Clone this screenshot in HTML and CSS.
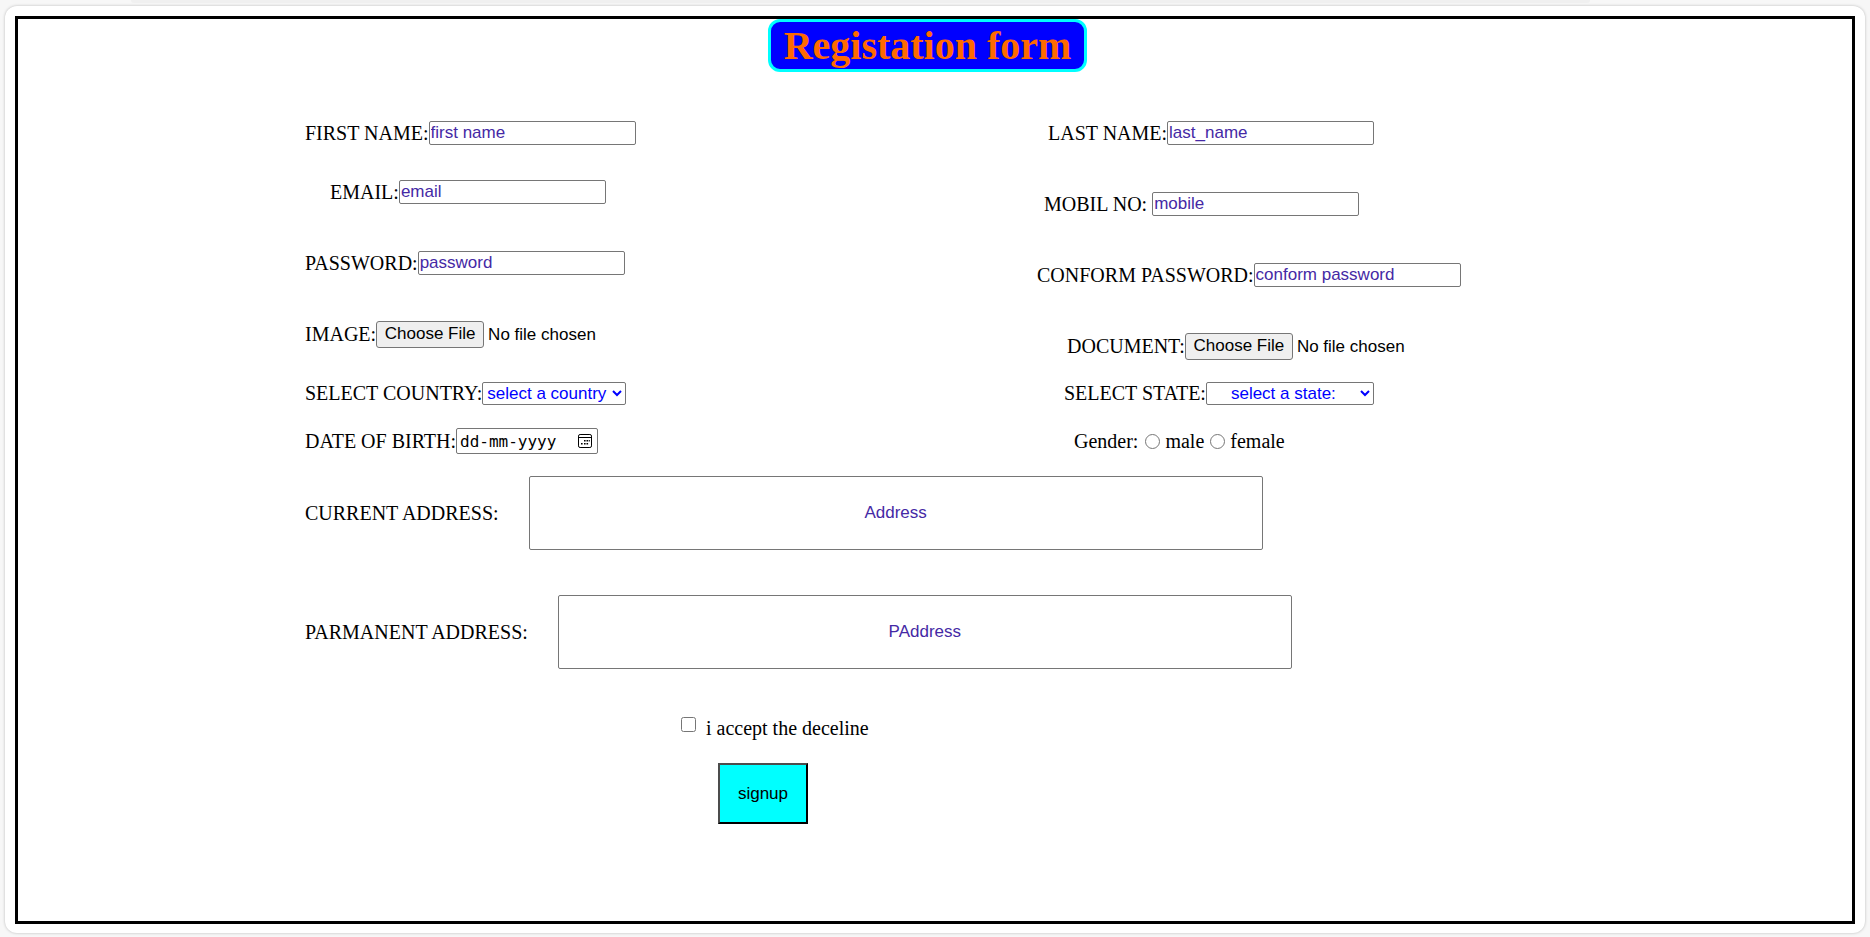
FILE: index.html
```
<!DOCTYPE html>
<html lang="en">
<head>
<meta charset="utf-8">
<title>Registation form</title>
<link rel="stylesheet" href="styles.css">
</head>
<body>
<div class="strip"></div>
<main class="card">
  <form class="frame">
    <header class="heading"><h1 class="title">Registation form</h1></header>
    <div class="columns">
      <div class="column">
        <div class="field gap-md"><label for="first">FIRST NAME:</label><input class="text" id="first" type="text" placeholder="first name"></div>
        <div class="field gap-lg indent-email"><label for="email">EMAIL:</label><input class="text" id="email" type="email" placeholder="email"></div>
        <div class="field gap-lg"><label for="password">PASSWORD:</label><input class="text" id="password" type="password" placeholder="password"></div>
        <div class="field gap-md"><label for="image">IMAGE:</label><input class="file" id="image" type="file"></div>
        <div class="field gap-sm"><label for="country">SELECT COUNTRY:</label><select class="select" id="country"><option>select a country</option></select></div>
        <div class="field"><label for="dob">DATE OF BIRTH:</label><span class="date"><input class="date-input" id="dob" type="text" placeholder="dd-mm-yyyy"><svg class="calendar" viewBox="0 0 14 14" aria-hidden="true"><rect x="0.5" y="0.5" width="13" height="13" rx="1.6" fill="none" stroke="#000"/><path d="M1 3.5h12" stroke="#000"/><path d="M6 6h1.6v1.6H6zM8.5 6h1.6v1.6H8.5zM10.8 6h1v1.6h-1zM3 9h1.6v1.6H3zM6 9h1.6v1.6H6zM8.5 9h1.6v1.6H8.5z"/></svg></span></div>
      </div>
      <div class="column">
        <div class="field gap-lg indent-last"><label for="last">LAST NAME:</label><input class="text" id="last" type="text" placeholder="last_name"></div>
        <div class="field gap-lg indent-mobile"><label for="mobile">MOBIL NO:</label><input class="text" id="mobile" type="text" placeholder="mobile"></div>
        <div class="field gap-lg"><label for="confirm">CONFORM PASSWORD:</label><input class="text" id="confirm" type="password" placeholder="conform password"></div>
        <div class="field gap-xs indent-document"><label for="document">DOCUMENT:</label><input class="file" id="document" type="file"></div>
        <div class="field gap-sm indent-state"><label for="state">SELECT STATE:</label><select class="select select-state" id="state"><option>select a state:</option></select></div>
        <div class="field indent-gender" role="radiogroup" aria-label="Gender"><span class="gender">Gender:</span><input class="radio" id="male" type="radio" name="gender"><label for="male">male</label><input class="radio radio-next" id="female" type="radio" name="gender"><label for="female">female</label></div>
      </div>
    </div>
    <div class="addresses">
      <div class="address"><label for="current">CURRENT ADDRESS:</label><input class="address-input" id="current" type="text" placeholder="Address"></div>
      <div class="address"><label for="permanent">PARMANENT ADDRESS:</label><input class="address-input" id="permanent" type="text" placeholder="PAddress"></div>
    </div>
    <div class="actions">
      <div class="accept"><input class="check" id="accept" type="checkbox"><label for="accept">i accept the deceline</label></div>
      <button class="signup" type="submit">signup</button>
    </div>
  </form>
</main>
</body>
</html>
```
FILE: styles.css
```
* { box-sizing: border-box; }
body {
  margin: 0;
  min-height: 100vh;
  display: flex;
  flex-direction: column;
  background: #f7f7f7;
  font: 20px/22px "Liberation Serif", "Times New Roman", serif;
  color: #000;
}
.strip {
  height: 3px;
  margin: 0 15% 3px 7%;
  background: #f0f0f0;
  border-radius: 0 0 8px 8px;
}
.card {
  flex: 1;
  display: flex;
  margin: 0 5px 4px;
  padding: 10px 10px 9px;
  background: #fff;
  border-radius: 12px;
  box-shadow: 0 0 3px rgba(0, 0, 0, 0.25);
}
.frame { flex: 1; border: 3px solid #000; }
.heading { display: flex; justify-content: center; padding-right: 15px; }
.title {
  margin: 0;
  padding: 1px 13px 0;
  border: 3px solid #0ff;
  border-radius: 12px;
  background: #00f;
  color: #ff6a00;
  font-size: 40px;
  line-height: 46px;
}
.columns {
  display: grid;
  grid-template-columns: 732px 1fr;
  margin-top: 49px;
  padding-left: 287px;
}
.field { display: flex; align-items: center; height: 24px; white-space: nowrap; }
.gap-xs { margin-bottom: 23px; }
.gap-sm { margin-bottom: 24px; }
.gap-md { margin-bottom: 35px; }
.gap-lg { margin-bottom: 47px; }
.indent-email { padding-left: 25px; }
.indent-last { padding-left: 11px; }
.indent-mobile { padding-left: 7px; }
.indent-mobile label { padding-right: 5px; }
.indent-document { padding-left: 30px; }
.indent-state { padding-left: 27px; }
.indent-gender { padding-left: 37px; }
.text, .select, .date-input, .address-input {
  margin: 0;
  border: 1px solid #767676;
  border-radius: 2px;
  background: #fff;
  font: 17px "Liberation Sans", Arial, sans-serif;
}
.text { width: 207px; height: 24px; padding: 0 1px; }
.text::placeholder, .address-input::placeholder { color: #4529a5; opacity: 1; }
.file { width: 300px; font: 17px "Liberation Sans", Arial, sans-serif; }
.file::file-selector-button {
  width: 108px;
  height: 27px;
  padding: 0;
  border: 1px solid #767676;
  border-radius: 3px;
  background: #efefef;
  font: 17px "Liberation Sans", Arial, sans-serif;
}
.select { width: 144px; height: 23px; color: #00f; padding: 0; }
.select-state { width: 168px; padding: 0 3px 0 20px; }
.date { position: relative; display: flex; }
.date-input {
  width: 142px;
  height: 26px;
  padding: 0 3px;
  font: 16px "DejaVu Sans Mono", monospace;
}
.date-input::placeholder { color: #000; opacity: 1; }
.calendar { position: absolute; right: 6px; top: 6px; width: 14px; height: 14px; }
.gender { margin-right: 7px; }
.radio { width: 15px; height: 15px; margin: 0 5px 0 0; }
.radio-next { margin-left: 6px; }
.addresses { display: flex; flex-direction: column; gap: 45px; margin-top: 23px; padding-left: 287px; }
.address { display: flex; align-items: center; gap: 30px; white-space: nowrap; }
.address-input { width: 734px; height: 74px; text-align: center; }
.actions { display: flex; flex-direction: column; align-items: flex-start; margin-top: 48px; padding-left: 663px; }
.accept { display: flex; align-items: flex-start; }
.check { width: 15px; height: 15px; margin: 0 10px 0 0; }
.signup {
  width: 90px;
  height: 61px;
  margin: 24px 0 0 37px;
  border: 2px solid #000;
  border-top-color: #4c4c4c;
  border-left-color: #4c4c4c;
  background: #0ff;
  color: #000;
  font: 17px "Liberation Sans", Arial, sans-serif;
}
```
